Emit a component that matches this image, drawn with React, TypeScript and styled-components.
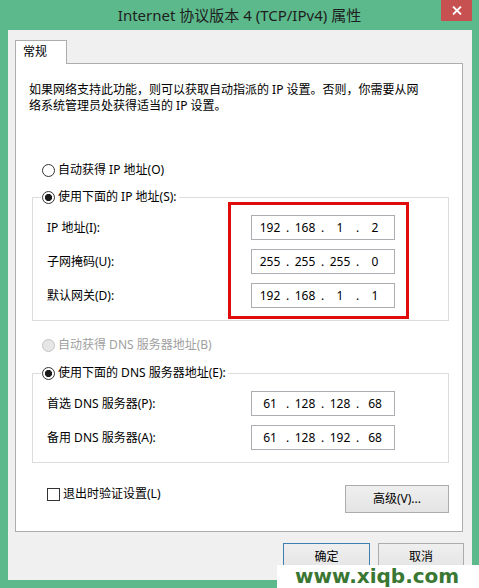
import React from "react";
import styled, { createGlobalStyle } from "styled-components";

const GlobalStyle = createGlobalStyle`
  html, body { margin: 0; padding: 0; }
  body { width: 479px; height: 588px; overflow: hidden; background: #5bb98b; }
  #root { width: 479px; height: 588px; }
  *, *::before, *::after { box-sizing: border-box; }
`;

const FONT = `"Noto Sans", "Noto Sans CJK SC", sans-serif`;

const Window = styled.div`
  position: relative;
  width: 479px;
  height: 588px;
  background: #5bb98b;
  display: flex;
  flex-direction: column;
  font-family: ${FONT};
  font-size: 12px;
  color: #000;
`;

const TitleBar = styled.div`
  height: 30px;
  flex: none;
  display: grid;
  grid-template-columns: 1fr auto 1fr;
  align-items: start;
`;

const Title = styled.div`
  grid-column: 2;
  font-size: 15px;
  line-height: 31px;
  color: #1e1e1e;
  white-space: nowrap;
`;

const CloseButton = styled.div`
  grid-column: 3;
  justify-self: end;
  width: 31px;
  height: 21px;
  margin-right: 7px;
  background: #c75050;
  display: flex;
  align-items: center;
  justify-content: center;
`;

const Client = styled.div`
  flex: 1;
  margin: 0 7px 8px 8px;
  background: #f0f0f0;
  padding: 10px 0 0 7px;
  display: flex;
  flex-direction: column;
`;

const TabStrip = styled.div`
  display: flex;
  height: 23px;
`;

const Tab = styled.div`
  position: relative;
  z-index: 1;
  width: 52px;
  height: 24px;
  border: 1px solid #adadad;
  border-bottom: none;
  background: #fff;
  padding-left: 7px;
  line-height: 22px;
`;

const Panel = styled.div`
  width: 448px;
  height: 469px;
  border: 1px solid #adadad;
  background: #fff;
  padding: 18px 13px 0 13px;
  display: flex;
  flex-direction: column;
`;

const Description = styled.p`
  margin: 0;
  line-height: 16px;
  white-space: nowrap;
`;

const RadioRow = styled.label<{ $disabled?: boolean; $indent?: number; $top?: number }>`
  display: flex;
  align-items: center;
  gap: 3px;
  height: 16px;
  line-height: 16px;
  white-space: nowrap;
  margin-left: ${(p) => p.$indent ?? 0}px;
  margin-top: ${(p) => p.$top ?? 0}px;
  color: ${(p) => (p.$disabled ? "#a0a0a0" : "#000")};
  align-self: flex-start;
`;

const RadioCircle = styled.span<{ $checked?: boolean; $disabled?: boolean }>`
  flex: none;
  width: 13px;
  height: 13px;
  border-radius: 50%;
  border: 1px solid ${(p) => (p.$disabled ? "#c4c4c4" : "#333")};
  background: ${(p) =>
    p.$disabled
      ? "#e6e6e6"
      : p.$checked
      ? "radial-gradient(circle, #1a1a1a 0 3.3px, #fff 3.9px)"
      : "#fff"};
`;

const Group = styled.fieldset<{ $top: number }>`
  margin: ${(p) => p.$top}px 0 0 3px;
  padding: 0;
  border: 1px solid #dcdcdc;
  min-width: 0;
`;

const GroupLegend = styled.legend`
  display: flex;
  height: 16px;
  margin-left: 8px;
  padding: 0 2px 0 1px;
  line-height: 16px;
`;

const GroupBody = styled.div`
  padding: 10px 0 12px 14px;
  display: flex;
  flex-direction: column;
  gap: 9px;
`;

const FieldRow = styled.div`
  display: grid;
  grid-template-columns: 204px 144px;
  align-items: center;
  height: 25px;
  line-height: 16px;
`;

const IpField = styled.div`
  width: 144px;
  height: 25px;
  border: 1px solid #abadb3;
  background: #fff;
  padding-left: 3px;
  display: grid;
  grid-template-columns: 30px 5px 30px 5px 30px 5px 30px;
  align-items: center;
  justify-items: center;
  line-height: 16px;
`;

const BottomRow = styled.div`
  margin-top: 22px;
  display: flex;
  justify-content: space-between;
  align-items: flex-start;
  padding-left: 18px;
`;

const CheckRow = styled.label`
  margin-top: 1px;
  display: flex;
  align-items: center;
  gap: 3px;
  height: 16px;
  line-height: 16px;
  white-space: nowrap;
`;

const CheckBox = styled.span`
  flex: none;
  width: 13px;
  height: 13px;
  border: 1px solid #333;
  background: #fff;
`;

const Button = styled.div<{ $width: number; $focused?: boolean }>`
  width: ${(p) => p.$width}px;
  height: 28px;
  border: 1px solid ${(p) => (p.$focused ? "#3c7fb1" : "#acacac")};
  background: linear-gradient(#efefef, #e4e4e4);
  display: flex;
  align-items: center;
  justify-content: center;
  line-height: 16px;
  white-space: nowrap;
`;

const DialogButtons = styled.div`
  margin-top: 11px;
  display: flex;
  justify-content: flex-end;
  gap: 8px;
  padding-right: 8px;
`;

const Highlight = styled.div`
  position: absolute;
  left: 228px;
  top: 202px;
  width: 181px;
  height: 117px;
  border: 3px solid #e00b0b;
  pointer-events: none;
`;

const Watermark = styled.div`
  position: absolute;
  right: 0;
  bottom: 0;
  width: 202px;
  height: 23px;
  background: #fff;
  padding-left: 18px;
  font-family: "DejaVu Sans", sans-serif;
  font-weight: bold;
  font-size: 20px;
  line-height: 23px;
  color: #3a7732;
  white-space: nowrap;
  overflow: hidden;
`;

const Dot = () => <span>.</span>;

const Ip: React.FC<{ parts: string[] }> = ({ parts }) => (
  <IpField>
    <span>{parts[0]}</span>
    <Dot />
    <span>{parts[1]}</span>
    <Dot />
    <span>{parts[2]}</span>
    <Dot />
    <span>{parts[3]}</span>
  </IpField>
);

const Radio: React.FC<{
  label: string;
  checked?: boolean;
  disabled?: boolean;
  indent?: number;
  top?: number;
}> = ({ label, checked, disabled, indent, top }) => (
  <RadioRow $disabled={disabled} $indent={indent} $top={top}>
    <RadioCircle $checked={checked} $disabled={disabled} />
    <span>{label}</span>
  </RadioRow>
);

export default function App() {
  return (
    <>
      <GlobalStyle />
      <Window>
        <TitleBar>
          <Title>Internet 协议版本 4 (TCP/IPv4) 属性</Title>
          <CloseButton>
            <svg width="10" height="9" viewBox="0 0 10 9">
              <path d="M1 0.5 L9 8.5 M9 0.5 L1 8.5" stroke="#fff" strokeWidth="1.8" />
            </svg>
          </CloseButton>
        </TitleBar>
        <Client>
          <TabStrip>
            <Tab>常规</Tab>
          </TabStrip>
          <Panel>
            <Description>
              如果网络支持此功能，则可以获取自动指派的 IP 设置。否则，你需要从网
              <br />
              络系统管理员处获得适当的 IP 设置。
            </Description>
            <Radio label="自动获得 IP 地址(O)" indent={13} top={48} />
            <Group $top={11}>
              <GroupLegend>
                <Radio label="使用下面的 IP 地址(S):" checked />
              </GroupLegend>
              <GroupBody>
                <FieldRow>
                  <span>IP 地址(I):</span>
                  <Ip parts={["192", "168", "1", "2"]} />
                </FieldRow>
                <FieldRow>
                  <span>子网掩码(U):</span>
                  <Ip parts={["255", "255", "255", "0"]} />
                </FieldRow>
                <FieldRow>
                  <span>默认网关(D):</span>
                  <Ip parts={["192", "168", "1", "1"]} />
                </FieldRow>
              </GroupBody>
            </Group>
            <Radio label="自动获得 DNS 服务器地址(B)" disabled indent={13} top={16} />
            <Group $top={12}>
              <GroupLegend>
                <Radio label="使用下面的 DNS 服务器地址(E):" checked />
              </GroupLegend>
              <GroupBody>
                <FieldRow>
                  <span>首选 DNS 服务器(P):</span>
                  <Ip parts={["61", "128", "128", "68"]} />
                </FieldRow>
                <FieldRow>
                  <span>备用 DNS 服务器(A):</span>
                  <Ip parts={["61", "128", "192", "68"]} />
                </FieldRow>
              </GroupBody>
            </Group>
            <BottomRow>
              <CheckRow>
                <CheckBox />
                <span>退出时验证设置(L)</span>
              </CheckRow>
              <Button $width={104}>高级(V)...</Button>
            </BottomRow>
          </Panel>
          <DialogButtons>
            <Button $width={87} $focused>
              确定
            </Button>
            <Button $width={86}>取消</Button>
          </DialogButtons>
        </Client>
        <Highlight />
        <Watermark>www.xiqb.com</Watermark>
      </Window>
    </>
  );
}
